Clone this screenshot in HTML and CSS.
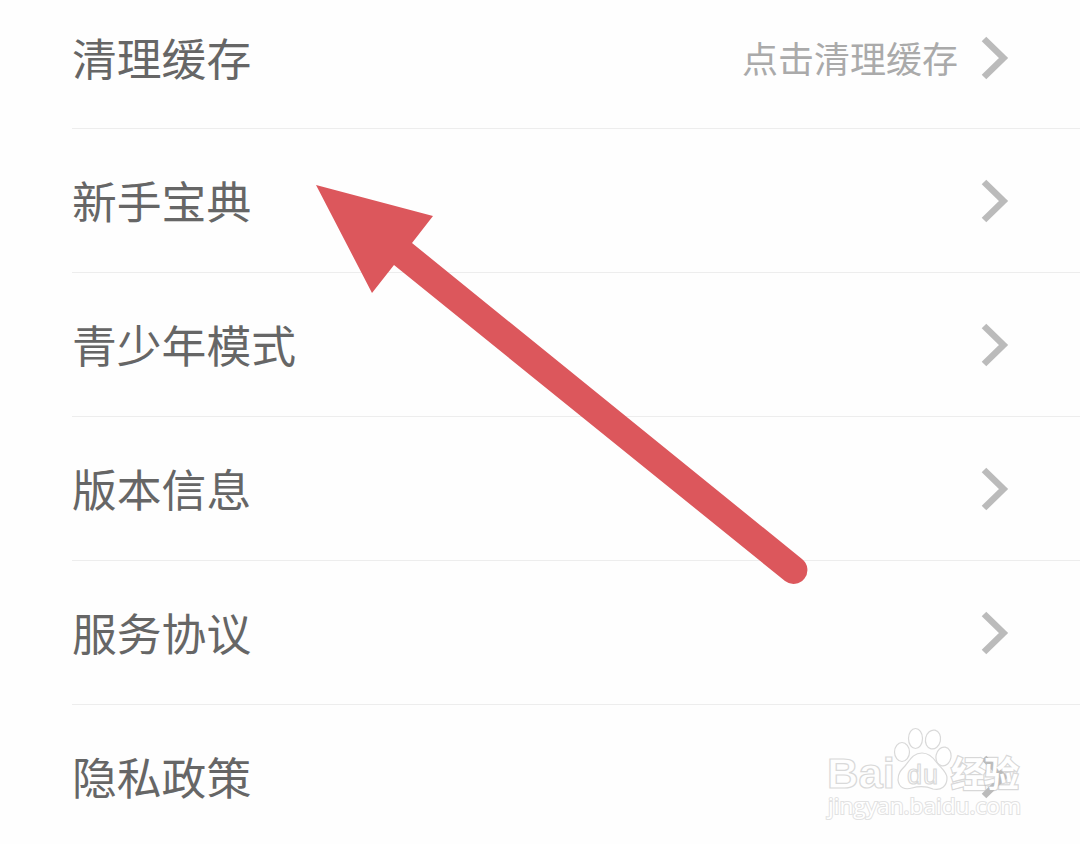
FILE: index.html
```html
<!DOCTYPE html>
<html lang="zh-CN">
<head>
    <meta charset="UTF-8">
    <meta name="viewport" content="width=device-width, initial-scale=1.0">
    <title>设置</title>
    <link rel="stylesheet" href="styles.css">
</head>
<body>

<ul class="settings">
    <li class="row">
        <span class="label">清理缓存</span>
        <span class="hint">点击清理缓存</span>
        <svg class="chevron" viewBox="0 0 28 44"><path d="M3 3 L22.500 22 L3 41"/></svg>
    </li>
    <li class="row">
        <span class="label">新手宝典</span>
        <svg class="chevron" viewBox="0 0 28 44"><path d="M3 3 L22.500 22 L3 41"/></svg>
    </li>
    <li class="row">
        <span class="label">青少年模式</span>
        <svg class="chevron" viewBox="0 0 28 44"><path d="M3 3 L22.500 22 L3 41"/></svg>
    </li>
    <li class="row">
        <span class="label">版本信息</span>
        <svg class="chevron" viewBox="0 0 28 44"><path d="M3 3 L22.500 22 L3 41"/></svg>
    </li>
    <li class="row">
        <span class="label">服务协议</span>
        <svg class="chevron" viewBox="0 0 28 44"><path d="M3 3 L22.500 22 L3 41"/></svg>
    </li>
    <li class="row">
        <span class="label">隐私政策</span>
        <svg class="chevron" viewBox="0 0 28 44"><path d="M3 3 L22.500 22 L3 41"/></svg>
    </li>
</ul>

<!-- arrow pointing at 新手宝典 -->
<svg class="arrow" viewBox="0 0 1080 844">
    <path d="M316 185 L433 216 L412 243 L802 559 A13.5 13.5 0 0 1 785 581 L394 265 L372 293 Z"/>
</svg>

<svg class="watermark" viewBox="0 0 230 120">
    <text class="brand" x="17" y="73" textLength="68" lengthAdjust="spacingAndGlyphs">Bai</text>
    <g class="paw">
        <ellipse cx="92" cy="37" rx="7.5" ry="9.5"/>
        <ellipse cx="105.5" cy="23.5" rx="7" ry="10"/>
        <ellipse cx="123" cy="24.5" rx="7.5" ry="9.5" transform="rotate(12 123 24.5)"/>
        <ellipse cx="133.5" cy="41.5" rx="7.5" ry="9.5" transform="rotate(10 133.5 41.5)"/>
        <path d="M112 38 C103 38 100 45 95 51 C91 55 88 58 88 65 C89 73 95 75 102 73 C109 71 116 71 123 74 C131 76 137 71 137 63 C137 57 131 53 127 48 C123 42 119 38 112 38 Z"/>
    </g>
    <text class="du" x="97" y="69" textLength="31">du</text>
    <text class="jingyan" x="141" y="72" textLength="68">经验</text>
    <text class="site" x="18" y="99" textLength="193" lengthAdjust="spacingAndGlyphs">jingyan.baidu.com</text>
</svg>

</body>
</html>
```
FILE: styles.css
```css
body { font-family: "Noto Sans CJK SC", sans-serif; margin: 0; background-color: #fefefe; color: #666; overflow: hidden; }
.settings { list-style: none; margin: 0; padding: 0 0 0 72px; height: 844px; overflow: hidden; }
.row { display: flex; align-items: center; box-sizing: border-box; height: 144px; padding-right: 71px; border-bottom: 1px solid #ededed; }
.row:first-child { height: 129px; padding-bottom: 13px; }
.row:last-child { border-bottom: none; }
.label { flex: 1; font-size: 44.8px; line-height: 60px; padding-bottom: 2px; }
.hint { font-size: 36px; line-height: 50px; color: #aaa; margin-right: 23px; padding-bottom: 2px; }
.chevron { width: 28px; height: 44px; fill: none; stroke: #bbb; stroke-width: 6.5; }
.arrow { position: absolute; left: 0; top: 0; width: 1080px; height: 844px; fill: #dc575c; }
.watermark { position: absolute; left: 810px; top: 715px; width: 230px; height: 120px; fill: rgba(255,255,255,0.6); stroke: #d9d9d9; stroke-width: 1.2; }
.brand { font: bold 43px/1 "Liberation Sans", sans-serif; }
.du { font: 27px "Liberation Sans", sans-serif; }
.jingyan { font: bold 35px "Noto Sans CJK SC", sans-serif; paint-order: stroke; stroke: rgba(190,190,190,0.6); stroke-width: 2.5; fill: #fff; }
.site { font: 22px "Open Sans", sans-serif; paint-order: stroke; stroke: #e2e2e2; stroke-width: 2; fill: #fff; }
```
